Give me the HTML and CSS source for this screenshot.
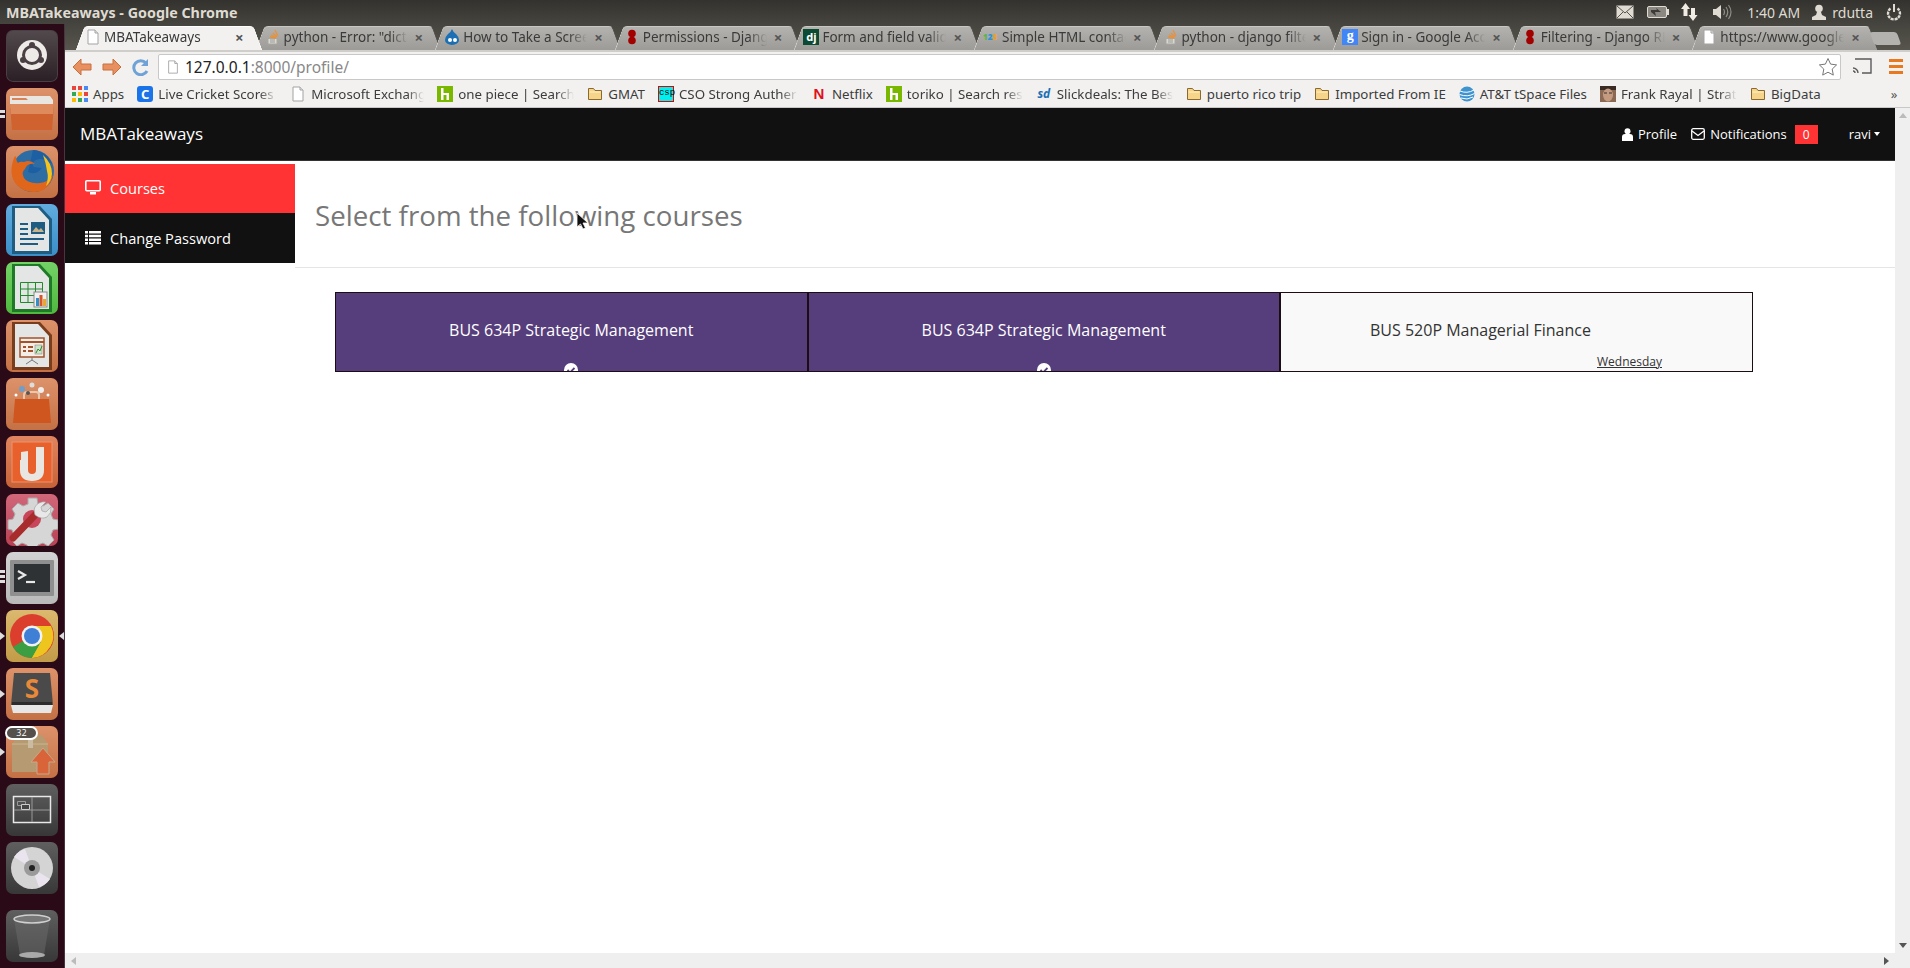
FILE: index.html
```html
<!DOCTYPE html>
<html lang="en">
<head>
  <meta charset="UTF-8" />
  <title>MBATakeaways</title>
  <link rel="stylesheet" href="styles.css">
</head>
<body>

  <svg class="sprites" width="0" height="0">
    <symbol id="doc" viewBox="0 0 16 16"><path d="M3 1h7l3 3v11H3z" fill="#fff" stroke="#a3a3a3"/><path d="M10 1v3h3" fill="#e4e4e4" stroke="#a3a3a3"/></symbol>
    <symbol id="folder" viewBox="0 0 16 16"><path d="M1.5 13.5v-11h5l1.500 2h6.500v9z" fill="#f6d48a" stroke="#8a6a2c"/><path d="M2.500 6h11" stroke="#fff2c8"/></symbol>
    <symbol id="so" viewBox="0 0 16 16"><path d="M3 10v5h9v-5" fill="#d8d8d0" stroke="#a8a8a0"/><path d="M5 11h5M5 13h5" stroke="#999"/><path d="M5 8l6 1M6 6l5 2.500M8 4l4 4M10 1l3 6" stroke="#e8913a" stroke-width="1.300" fill="none"/></symbol>
    <symbol id="reddots" viewBox="0 0 16 16"><circle cx="8" cy="4.500" r="3.800" fill="#a30000"/><circle cx="8" cy="11.500" r="3.800" fill="#a30000"/></symbol>
    <symbol id="houzz" viewBox="0 0 16 16"><rect width="16" height="16" fill="#7ab800"/><path d="M4 2v12h2.500v-5h3v5H12V7H6.500V2z" fill="#fff"/></symbol>
  </svg>

  <div class="topbar">
    <span class="window-title">MBATakeaways - Google Chrome</span>
    <div class="tray">
      <svg class="tray-mail" width="18" height="14" viewBox="0 0 18 14"><rect x=".5" y=".5" width="17" height="13" fill="#dfdbd2"/><path d="M1 1l8 7 8-7M1 13l6-6M17 13l-6-6" fill="none" stroke="#55534b"/></svg>
      <svg class="tray-batt" width="22" height="14" viewBox="0 0 22 14"><rect x=".5" y="1.500" width="19" height="11" rx="1.500" fill="#8a8880" stroke="#dfdbd2"/><rect x="20" y="4" width="2" height="6" fill="#dfdbd2"/><path d="M4 5h6l-1-2 5 4h-6l1 4-5-4z" fill="#3c3b37"/></svg>
      <svg class="tray-net" width="17" height="20" viewBox="0 0 17 20"><path d="M4.500 1L9 7H6.500v7h-4V7H0z" fill="#f0ece3"/><path d="M12 19l4.500-6H14V6h-4v7H7.500z" fill="#f0ece3"/></svg>
      <svg class="tray-vol" width="20" height="18" viewBox="0 0 20 18"><path d="M1 6h3l5-4v14l-5-4H1z" fill="#dfdbd2"/><path d="M11.500 6q2 3 0 6M14 4q3.500 5 0 10M16.500 2q5 7 0 14" fill="none" stroke="#8f8d85" stroke-width="1.200"/></svg>
      <span class="tray-time">1:40 AM</span>
      <svg class="tray-user" width="14" height="16" viewBox="0 0 14 16"><circle cx="7" cy="4.500" r="3.800" fill="#dfdbd2"/><path d="M5 8h4l1 3 4 2v3H0v-3l4-2z" fill="#dfdbd2"/></svg>
      <span class="tray-name">rdutta</span>
      <svg class="tray-power" width="16" height="18" viewBox="0 0 16 18"><path d="M4.500 4.500a6 6 0 1 0 7 0" transform="translate(0 1)" fill="none" stroke="#dfdbd2" stroke-width="2.400" stroke-dasharray="3 .8"/><path d="M8 1v8" stroke="#dfdbd2" stroke-width="2"/></svg>
    </div>
  </div>

  <div class="desktop">
    <nav class="launcher">
      <div class="tile tile-dark">
        <svg viewBox="0 0 52 52"><circle cx="26" cy="25" r="15" fill="#eeeae8"/><circle cx="26" cy="25" r="8.500" fill="none" stroke="#4a4044" stroke-width="3"/><circle cx="26" cy="15" r="3" fill="#4a4044"/><circle cx="17" cy="30" r="3" fill="#4a4044"/><circle cx="35" cy="30" r="3" fill="#4a4044"/></svg>
      </div>
      <div class="tile tile-orange">
        <span class="pip pip-two"></span>
        <svg viewBox="0 0 52 52"><path d="M4 8h40l3 4v8H4z" fill="#e9e6e2"/><path d="M6 10h14l2 2H6z" fill="#d98258"/><path d="M4 16h44l-2 26H6z" fill="#d0622f"/><path d="M4 16h44l-1 10H5z" fill="#de8a5c"/></svg>
      </div>
      <div class="tile tile-orange">
        <svg viewBox="0 0 52 52"><circle cx="27" cy="25" r="21" fill="#2e6da4"/><path d="M27 4a21 21 0 0 1 19 14q-10-7-16-4t-2 7l8 1q-6 8-14 4" fill="#1d5fa3"/><path d="M8 12Q2 28 10 38q10 11 25 7 9-4 12-16-5 7-13 8-12 1-16-5-3-6 1-9 2-6 10-5-5-5-11-2-4-1-6 1-2-2-2-7-2 1-2 2" fill="#e0661b"/><path d="M37 9q9 8 9 19-1 8-6 12 3-8 1-15-1-8-4-16" fill="#f6c21c"/></svg>
      </div>
      <div class="tile tile-blue">
        <svg viewBox="0 0 52 52"><path d="M6 2h28l12 13v35H6z" fill="#1f5c82"/><path d="M9 4h23l11 12v31H9z" fill="#e4e6e6"/><path d="M14 19h8v2h-8zM14 24h8v2h-8zM14 29h8v2h-8zM14 34h24v2H14zM14 39h18v2H14z" fill="#1f5c82"/><rect x="25" y="18" width="14" height="12" fill="#1f5c82"/><path d="M26 28l4-5 3 3 2-2 3 4z" fill="#c9b48a"/></svg>
      </div>
      <div class="tile tile-green">
        <svg viewBox="0 0 52 52"><path d="M6 2h28l12 13v35H6z" fill="#1f7a28"/><path d="M9 4h23l11 12v31H9z" fill="#e4e6e6"/><path d="M14.500 20.500h22v20h-22zM14.500 27h22M14.500 33.500h22M22 20.500v20M29.500 20.500v20" fill="none" stroke="#1f8a28"/><rect x="28" y="30" width="13" height="15" fill="#f0f0f0" stroke="#888"/><rect x="30" y="36" width="3" height="8" fill="#2f8fc9"/><rect x="33.500" y="33" width="3" height="11" fill="#d8542a"/><rect x="37" y="37" width="3" height="7" fill="#e8a92c"/></svg>
      </div>
      <div class="tile tile-orange">
        <svg viewBox="0 0 52 52"><path d="M6 2h28l12 13v35H6z" fill="#7a3d1c"/><path d="M9 4h23l11 12v31H9z" fill="#e4e6e6"/><rect x="14" y="18" width="24" height="19" fill="#f3efe8" stroke="#a4522a" stroke-width="1.500"/><path d="M14 22h24" stroke="#a4522a" stroke-width="2"/><path d="M17 26h3v2h-3zM17 30h3v2h-3zM22 26h5v2h-5zM22 30h5v2h-5z" fill="#a4522a"/><rect x="29" y="25" width="7" height="9" fill="#cfe3c9" stroke="#777" stroke-width=".5"/><path d="M30 33l2-4 2 2 2-5" fill="none" stroke="#2c8a2c"/><path d="M26 37v3l-6 4M26 40l6 4" stroke="#777" fill="none"/></svg>
      </div>
      <div class="tile tile-orange">
        <svg viewBox="0 0 52 52"><path d="M9 21h34l2 24H7z" fill="#d0561f"/><path d="M18 21v-4q0-3 3-3h9q3 0 3 3v4" fill="none" stroke="#e9c6ac" stroke-width="2"/><circle cx="16" cy="11" r="3" fill="#6f9fc9"/><circle cx="26" cy="7" r="2.500" fill="#ddd"/><circle cx="35" cy="12" r="3" fill="#eee"/><circle cx="22" cy="15" r="2" fill="#555"/><circle cx="42" cy="17" r="1.500" fill="#fff"/><circle cx="10" cy="17" r="1.500" fill="#fff"/></svg>
      </div>
      <div class="tile tile-ubone">
        <svg viewBox="0 0 52 52"><rect x="6" y="6" width="40" height="40" fill="#e8602c" stroke="#f0926a"/><path d="M15 16h6v6h-6z" fill="#eee"/><path d="M15 16l7-1v19q0 4 4 4t4-4V11h8v23q0 11-12 11T14 34V24h1z" fill="#e9e6e2"/></svg>
      </div>
      <div class="tile tile-red">
        <svg viewBox="0 0 52 52"><path d="M22 4h9l1 6 5 2 5-3 6 6-3 5 2 5 5 1v9l-5 1-2 5 3 5-6 6-5-3-5 2-1 2H22l-1-2-5-2-5 3-6-6 3-5-2-5-4-1v-9l5-1 2-5-3-5 6-6 5 3 5-2z" fill="#d6d6d6" stroke="#aaa"/><circle cx="26" cy="25" r="9" fill="#c8455a"/><path d="M7 44l23-24" stroke="#a82c2c" stroke-width="7" stroke-linecap="round"/><path d="M29 21q-3-8 4-12 4-2 7-1l-5 5 1 4 4 1 5-5q1 6-4 10-6 3-12-2z" fill="#e8e8e8" stroke="#999" stroke-width=".6"/></svg>
      </div>
      <div class="tile tile-silver">
        <span class="pip pip-three"></span>
        <svg viewBox="0 0 52 52"><rect x="4" y="8" width="44" height="36" fill="#8f8f8f" rx="1"/><rect x="8" y="12" width="36" height="28" fill="#2f3234"/><path d="M12 19l7 4-7 4" fill="none" stroke="#e8e8e8" stroke-width="2.200"/><path d="M20 30h9" stroke="#e8e8e8" stroke-width="2.200"/></svg>
      </div>
      <div class="tile tile-gold">
        <span class="pip pip-arrow"></span>
        <span class="pip pip-back"></span>
        <svg viewBox="0 0 52 52"><circle cx="26" cy="26" r="22" fill="#dc3e2e"/><path d="M26 26h21a22 22 0 0 1-3 11L26 48z" fill="#eec41e"/><path d="M26 16h19a22 22 0 0 1-1 21L34 32z" fill="#eec41e"/><path d="M7 37a22 22 0 0 0 19 11l9-16-18-1z" fill="#3b9e42"/><path d="M26 48l9-16 9 5a22 22 0 0 1-18 11z" fill="#eec41e"/><circle cx="26" cy="26" r="10.500" fill="#f2f2f2"/><circle cx="26" cy="26" r="8" fill="#3f7fd6"/></svg>
      </div>
      <div class="tile tile-orange">
        <span class="pip pip-arrow"></span>
        <svg viewBox="0 0 52 52"><path d="M8 5h36l3 32H5z" fill="#4a4a4a"/><path d="M5 37h42l-2 8H7z" fill="#e6e6e6"/><path d="M6 34h40v3H6z" fill="#2c2c2c"/><text x="26" y="30" class="sublime-s">S</text></svg>
      </div>
      <div class="tile tile-orange">
        <span class="pip pip-arrow"></span>
        <span class="count">32</span>
        <svg viewBox="0 0 52 52"><path d="M6 18l6-9h24l6 9v28H6z" fill="#b69a72"/><path d="M6 18h36" stroke="#cdb590"/><path d="M22 9h5v13h-5z" fill="#cbbba0"/><path d="M37 22l12 14h-6v12H31V36h-6z" fill="#d9643a" stroke="#c4a98a"/></svg>
      </div>
      <div class="tile tile-grey">
        <svg viewBox="0 0 52 52"><rect x="7.500" y="12.500" width="37" height="26" fill="none" stroke="#e8e8e8" stroke-width="1.500"/><path d="M26 13v25M8 26h36" stroke="#999"/><path d="M11.500 17.500h8v4h-8z" fill="none" stroke="#999"/><path d="M15.500 20.500h8v5h-8z" fill="#444" stroke="#ccc"/></svg>
      </div>
      <div class="tile tile-grey">
        <svg viewBox="0 0 52 52"><circle cx="26" cy="26" r="21" fill="#d4d4d4"/><path d="M26 26L8 15a21 21 0 0 1 11-8zM26 26l18 11a21 21 0 0 1-11 8z" fill="#e9e4ee"/><circle cx="26" cy="26" r="8" fill="#9a9a9a"/><circle cx="26" cy="26" r="3" fill="#222"/></svg>
      </div>
      <div class="tile tile-grey tile-trash">
        <svg viewBox="0 0 52 52"><path d="M8 9l6 36h24l6-36z" fill="#6c6c6c" fill-opacity=".5"/><ellipse cx="26" cy="9" rx="18" ry="4" fill="#777" stroke="#d0d0d0" stroke-width="1.500"/><ellipse cx="26" cy="45" rx="13" ry="3" fill="#aaa"/></svg>
      </div>
    </nav>

    <div class="browser">
      <div class="tabstrip">
        <div class="tab tab-active"><svg class="fav"><use href="#doc"/></svg><span class="tab-title">MBATakeaways</span><span class="tab-x">×</span></div>
        <div class="tab"><svg class="fav"><use href="#so"/></svg><span class="tab-title">python - Error: "dict</span><span class="tab-x">×</span></div>
        <div class="tab"><svg class="fav" viewBox="0 0 16 16"><path d="M8 0q1 3 4 5 3 3 3 6a7 5 0 0 1-14 0q0-3 3-6 3-2 4-5z" fill="#1a6fb5"/><circle cx="6" cy="11" r="2" fill="#fff"/><circle cx="11" cy="11" r="2" fill="#fff"/></svg><span class="tab-title">How to Take a Scree</span><span class="tab-x">×</span></div>
        <div class="tab"><svg class="fav"><use href="#reddots"/></svg><span class="tab-title">Permissions - Djang</span><span class="tab-x">×</span></div>
        <div class="tab"><span class="fav fav-dj">dj</span><span class="tab-title">Form and field valid</span><span class="tab-x">×</span></div>
        <div class="tab"><span class="fav fav-123"><b class="c-green">1</b><b class="c-blue">2</b><b class="c-orange">3</b></span><span class="tab-title">Simple HTML contac</span><span class="tab-x">×</span></div>
        <div class="tab"><svg class="fav"><use href="#so"/></svg><span class="tab-title">python - django filte</span><span class="tab-x">×</span></div>
        <div class="tab"><span class="fav fav-g">g</span><span class="tab-title">Sign in - Google Acco</span><span class="tab-x">×</span></div>
        <div class="tab"><svg class="fav"><use href="#reddots"/></svg><span class="tab-title">Filtering - Django RE</span><span class="tab-x">×</span></div>
        <div class="tab"><svg class="fav"><use href="#doc"/></svg><span class="tab-title">https://www.google</span><span class="tab-x">×</span></div>
        <div class="newtab"></div>
      </div>

      <div class="toolbar">
        <svg class="tool-back" width="20" height="18" viewBox="0 0 20 18"><path d="M9 1L1 9l8 8v-5h10V6H9z" fill="#e89060" stroke="#c8703c"/></svg>
        <svg class="tool-fwd" width="20" height="18" viewBox="0 0 20 18"><path d="M11 1l8 8-8 8v-5H1V6h10z" fill="#e89060" stroke="#c8703c"/></svg>
        <svg class="tool-reload" width="17" height="18" viewBox="0 0 17 18"><path d="M14 5a7 7 0 1 0 1 8" fill="none" stroke="#6fa2d6" stroke-width="3"/><path d="M16 1v7H9z" fill="#6fa2d6"/></svg>
        <div class="omnibox">
          <svg class="omni-doc"><use href="#doc"/></svg>
          <span class="url"><span class="url-host">127.0.0.1</span>:8000/profile/</span>
          <svg class="omni-star" width="20" height="20" viewBox="0 0 20 20"><path d="M10 1.500l2.600 5.600 6 .8-4.400 4.200 1.100 6L10 15.200l-5.300 2.900 1.100-6L1.400 7.900l6-.8z" fill="#fff" stroke="#777"/></svg>
        </div>
        <svg class="tool-cast" width="20" height="17" viewBox="0 0 20 17"><path d="M3 1h16v14H10" fill="none" stroke="#5a5a5a" stroke-width="1.400"/><path d="M1 10a5 5 0 0 1 5 5M1 13a2 2 0 0 1 2 2" fill="none" stroke="#5a5a5a" stroke-width="1.400"/></svg>
        <div class="tool-menu"><i></i><i></i><i></i></div>
      </div>

      <div class="bookmarks">
        <div class="bm bm-apps"><span class="apps-grid"><i class="g1"></i><i class="g2"></i><i class="g3"></i><i class="g4"></i><i class="g5"></i><i class="g6"></i><i class="g7"></i><i class="g8"></i><i class="g9"></i></span><span>Apps</span></div>
        <div class="bm bm-clip bm-live"><span class="fav fav-c">C</span><span class="bm-text">Live Cricket Scores</span></div>
        <div class="bm bm-clip bm-ms"><svg class="fav"><use href="#doc"/></svg><span class="bm-text">Microsoft Exchang</span></div>
        <div class="bm bm-clip"><svg class="fav"><use href="#houzz"/></svg><span class="bm-text">one piece | Search</span></div>
        <div class="bm"><svg class="fav"><use href="#folder"/></svg><span>GMAT</span></div>
        <div class="bm bm-clip bm-live"><span class="fav fav-csp">csp</span><span class="bm-text">CSO Strong Auther</span></div>
        <div class="bm"><span class="fav fav-n">N</span><span>Netflix</span></div>
        <div class="bm bm-clip"><svg class="fav"><use href="#houzz"/></svg><span class="bm-text">toriko | Search resu</span></div>
        <div class="bm bm-clip"><span class="fav fav-sd">sd</span><span class="bm-text">Slickdeals: The Bes</span></div>
        <div class="bm"><svg class="fav"><use href="#folder"/></svg><span>puerto rico trip</span></div>
        <div class="bm"><svg class="fav"><use href="#folder"/></svg><span>Imported From IE</span></div>
        <div class="bm"><svg class="fav" viewBox="0 0 16 16"><circle cx="8" cy="8" r="7.500" fill="#3f94cf"/><path d="M1 5q7 3 14-1M.5 8.500q8 3 15-1M2 12q6 2.500 12-1" fill="none" stroke="#fff"/></svg><span>AT&amp;T tSpace Files</span></div>
        <div class="bm bm-clip"><svg class="fav" viewBox="0 0 16 16"><rect width="16" height="16" fill="#8a6a55"/><path d="M0 0h16v4H0z" fill="#3a2c24"/><ellipse cx="8" cy="9" rx="5" ry="6.500" fill="#c49a80"/><path d="M4 7h3M9 7h3" stroke="#333"/></svg><span class="bm-text">Frank Rayal | Strate</span></div>
        <div class="bm"><svg class="fav"><use href="#folder"/></svg><span>BigData</span></div>
        <span class="bm-more">»</span>
      </div>

      <div class="viewport">
        <div class="page">
          <header class="site-nav">
            <a class="brand">MBATakeaways</a>
            <div class="site-links">
              <span class="site-link">
                <svg width="11" height="13" viewBox="0 0 11 13"><circle cx="5.500" cy="3.200" r="3" fill="#fff"/><path d="M0 13V9q0-3 3-3h5q3 0 3 3v4z" fill="#fff"/></svg>
                Profile
              </span>
              <span class="site-link">
                <svg width="14" height="12" viewBox="0 0 14 12"><rect x=".7" y=".7" width="12.600" height="10.600" rx="1.500" fill="none" stroke="#fff" stroke-width="1.300"/><path d="M1 3l6 4.500L13 3" fill="none" stroke="#fff" stroke-width="1.300"/></svg>
                Notifications
              </span>
              <span class="badge">0</span>
              <span class="user-menu">ravi<i class="caret"></i></span>
            </div>
          </header>

          <div class="page-body">
            <aside class="sidebar">
              <a class="side-item side-active">
                <svg width="16" height="15" viewBox="0 0 16 15"><rect x=".8" y=".8" width="14.400" height="10" rx="1" fill="none" stroke="#fff" stroke-width="1.600"/><rect x="5" y="12" width="6" height="2.500" fill="#fff"/></svg>
                Courses
              </a>
              <a class="side-item">
                <svg width="16" height="14" viewBox="0 0 16 14"><path d="M0 0h16v2.500H0zM0 3.700h16v2.500H0zM0 7.400h16v2.500H0zM0 11.100h16v2.500H0z" fill="#fff"/><path d="M3.500 0v14" stroke="#111"/></svg>
                Change Password
              </a>
            </aside>

            <main class="content">
              <div class="page-header">
                <h1>Select from the following courses</h1>
              </div>
              <div class="courses">
                <div class="course course-on">
                  <span class="course-name">BUS 634P Strategic Management</span>
                  <span class="course-check"><svg width="14" height="14" viewBox="0 0 14 14"><circle cx="7" cy="7" r="7" fill="#fff"/><path d="M3.500 7l2.500 2.500L10.500 5" fill="none" stroke="#563d7c" stroke-width="1.800"/></svg></span>
                </div>
                <div class="course course-on">
                  <span class="course-name">BUS 634P Strategic Management</span>
                  <span class="course-check"><svg width="14" height="14" viewBox="0 0 14 14"><circle cx="7" cy="7" r="7" fill="#fff"/><path d="M3.500 7l2.500 2.500L10.500 5" fill="none" stroke="#563d7c" stroke-width="1.800"/></svg></span>
                </div>
                <div class="course course-off">
                  <span class="course-name">BUS 520P Managerial Finance</span>
                  <a class="course-day">Wednesday</a>
                </div>
              </div>
            </main>
          </div>

          <svg class="cursor" width="13" height="18" viewBox="0 0 13 18"><path d="M1 1v14l3.500-3 2.500 5 2.500-1-2.500-5H12z" fill="#111" stroke="#fff" stroke-width=".8"/></svg>

          <div class="hscroll"><i class="arrow-left"></i><i class="arrow-right"></i></div>
        </div>
        <div class="vscroll"><i class="arrow-up"></i><i class="arrow-down"></i></div>
      </div>
    </div>
  </div>

</body>
</html>
```

FILE: styles.css
```css
/* Desktop frame */
html, body {
  margin: 0;
  padding: 0;
  height: 100%;
  overflow: hidden;
}

body {
  display: flex;
  flex-direction: column;
  font-family: 'Open Sans', 'Noto Sans', sans-serif;
  background: #fff;
}

.sprites {
  position: absolute;
}

.topbar {
  height: 24px;
  flex: none;
  display: flex;
  align-items: center;
  justify-content: space-between;
  background: linear-gradient(#33322e, #45443e);
  color: #dfdbd2;
  font-family: 'Noto Sans', sans-serif;
}

.window-title {
  margin-left: 6px;
  font-size: 14.3px;
  font-weight: 700;
}

.tray {
  display: flex;
  align-items: center;
  margin-right: 8px;
  font-size: 14px;
}

.tray-batt { margin-left: 13px; }
.tray-net { margin-left: 12px; }
.tray-vol { margin-left: 14px; }
.tray-time { margin-left: 15px; }
.tray-user { margin-left: 12px; }
.tray-name { margin-left: 6px; }
.tray-power { margin-left: 13px; }

.desktop {
  flex: 1;
  display: flex;
  min-height: 0;
}

/* Launcher */
.launcher {
  width: 65px;
  flex: none;
  box-sizing: border-box;
  padding: 6px 0 0 6px;
  display: flex;
  flex-direction: column;
  gap: 6px;
  background: #2a0a17;
  border-right: 1px solid #4a3440;
}

.tile {
  position: relative;
  width: 52px;
  height: 52px;
  flex: none;
  border-radius: 7px;
  background-image: linear-gradient(rgba(255, 255, 255, 0.18), rgba(0, 0, 0, 0.08));
}

.tile svg {
  display: block;
  width: 52px;
  height: 52px;
}

.tile-dark { background-color: #2d2227; box-shadow: inset 0 0 0 1px #4a4044; }
.tile-orange { background-color: #d57a4a; }
.tile-blue { background-color: #3f9ad8; }
.tile-green { background-color: #55c844; }
.tile-ubone { background-color: #d96a3c; }
.tile-red { background-color: #c8465c; }
.tile-silver { background-color: #c9c9c9; }
.tile-gold { background-color: #d3a94e; }
.tile-grey { background-color: #3c3c3c; }
.tile-trash { margin-top: 10px; }

.pip {
  position: absolute;
  left: -6px;
  top: 22px;
  width: 4px;
  height: 8px;
}

.pip-two {
  height: 3px;
  width: 5px;
  background: #ddd;
  box-shadow: 0 5px 0 #ddd;
}

.pip-three {
  height: 3px;
  width: 5px;
  top: 18px;
  background: #ddd;
  box-shadow: 0 5px 0 #ddd, 0 10px 0 #ddd;
}

.pip-arrow {
  width: 0;
  height: 0;
  border-left: 5px solid #ddd;
  border-top: 4px solid transparent;
  border-bottom: 4px solid transparent;
}

.pip-back {
  left: auto;
  right: -6px;
  width: 0;
  height: 0;
  border-right: 5px solid #ddd;
  border-top: 4px solid transparent;
  border-bottom: 4px solid transparent;
}

.count {
  position: absolute;
  left: -1px;
  top: 0;
  z-index: 1;
  width: 33px;
  height: 14px;
  box-sizing: border-box;
  border: 2px solid #fff;
  border-radius: 7px;
  background: #55504c;
  color: #fff;
  font-size: 9px;
  line-height: 10px;
  text-align: center;
}

.sublime-s {
  font-family: 'Open Sans', sans-serif;
  font-size: 26px;
  font-weight: 700;
  fill: #e8893a;
  text-anchor: middle;
}

/* Chrome */
.browser {
  flex: 1;
  min-width: 0;
  display: flex;
  flex-direction: column;
}

.tabstrip {
  height: 26px;
  flex: none;
  display: flex;
  align-items: flex-end;
  padding-left: 9px;
  background: linear-gradient(#45443e, #57554d);
  font-family: 'Noto Sans', sans-serif;
  font-size: 13.5px;
}

.tab {
  position: relative;
  width: 179.6px;
  height: 24px;
  flex: none;
  display: flex;
  align-items: center;
  padding: 0 0 2px 11px;
  box-sizing: border-box;
  color: #3a3a3a;
}

.tab::before, .tab::after {
  content: "";
  position: absolute;
  top: 0;
  bottom: 0;
  width: 55%;
  background: linear-gradient(#b3b2ae, #9c9b97);
  border-top: 1px solid #c8c7c3;
  z-index: 0;
}

.tab::before {
  left: 6px;
  transform: skewX(-20deg);
  border-left: 1px solid #d8d7d3;
  border-radius: 4px 0 0 0;
}

.tab::after {
  right: -4px;
  transform: skewX(20deg);
  border-right: 1px solid #55534d;
  border-radius: 0 4px 0 0;
}

.tab-active::before, .tab-active::after {
  background: #f2f1f0;
  border-color: #fff;
}

.tab-active {
  z-index: 1;
}

.tab > * {
  position: relative;
  z-index: 1;
}

.fav {
  width: 16px;
  height: 16px;
  flex: none;
  display: inline-block;
}

.tab-title {
  width: 124px;
  margin-left: 3px;
  overflow: hidden;
  white-space: nowrap;
  -webkit-mask-image: linear-gradient(to right, #000 85%, transparent);
  mask-image: linear-gradient(to right, #000 85%, transparent);
}

.tab-x {
  margin-left: 7px;
  color: #555;
  font-size: 15px;
  font-weight: 700;
  line-height: 1;
}

.fav-dj {
  background: #0c4b33;
  color: #fff;
  font: bold 11px/15px 'Noto Sans', sans-serif;
  text-align: center;
}

.fav-123 {
  font: bold 8px/16px 'Noto Sans', sans-serif;
  white-space: nowrap;
}

.c-green { color: #55b848; }
.c-blue { color: #2f8fd8; }
.c-orange { color: #eda02c; }

.fav-g {
  background: #4285f4;
  color: #fff;
  font: bold 14px/14px 'Liberation Serif', serif;
  text-align: center;
}

.fav-c {
  background: #1a73e8;
  color: #fff;
  border-radius: 3px;
  font: bold 13px/16px 'Noto Sans', sans-serif;
  text-align: center;
}

.fav-csp {
  background: #00f0f0;
  color: #000;
  border: 1px solid #e00000;
  box-sizing: border-box;
  font: 9px/12px 'Liberation Mono', monospace;
  text-align: center;
}

.fav-n {
  color: #e01020;
  font: bold 15px/16px 'Liberation Sans', sans-serif;
  text-align: center;
}

.fav-sd {
  color: #1a6fb5;
  font: italic bold 12px/16px 'Noto Sans', sans-serif;
  text-align: center;
}

.newtab {
  width: 27px;
  height: 13px;
  margin: 0 0 5px 2px;
  background: #b3b2ae;
  border-radius: 3px;
  transform: skewX(20deg);
}

.toolbar {
  height: 31px;
  flex: none;
  box-sizing: border-box;
  display: flex;
  align-items: center;
  padding-left: 7px;
  background: #f2f1f0;
  border-top: 2px solid #cfcecb;
}

.tool-fwd { margin-left: 10px; }
.tool-reload { margin-left: 10px; }

.omnibox {
  flex: none;
  width: 1683px;
  height: 26px;
  margin-left: 9px;
  box-sizing: border-box;
  display: flex;
  align-items: center;
  padding: 0 2px 0 7px;
  background: #fff;
  border: 1px solid #c8c8c8;
  border-radius: 2px;
}

.omni-doc {
  width: 14px;
  height: 16px;
}

.url {
  flex: 1;
  margin-left: 5px;
  color: #888;
  font-family: 'Noto Sans', sans-serif;
  font-size: 15.5px;
}

.url-host { color: #222; }

.tool-cast { margin-left: 11px; }

.tool-menu {
  margin-left: 17px;
  width: 14px;
  display: flex;
  flex-direction: column;
  gap: 3px;
}

.tool-menu i {
  display: block;
  height: 3px;
  background: #e8791e;
}

.bookmarks {
  height: 27px;
  flex: none;
  box-sizing: border-box;
  display: flex;
  align-items: center;
  padding-left: 7px;
  background: #f2f1f0;
  border-bottom: 1px solid #c8c8c8;
  color: #3c3c3c;
  font-family: 'Noto Sans', sans-serif;
  font-size: 13.3px;
  white-space: nowrap;
}

.bm {
  display: flex;
  align-items: center;
  gap: 5px;
  flex: none;
  margin-right: 13px;
}

.bm-clip {
  width: 137px;
}

.bm-live { width: 140px; }
.bm-ms { width: 134px; }

.bm-text {
  flex: 1;
  min-width: 0;
  overflow: hidden;
  -webkit-mask-image: linear-gradient(to right, #000 85%, transparent);
  mask-image: linear-gradient(to right, #000 85%, transparent);
}

.apps-grid {
  width: 16px;
  height: 16px;
  display: grid;
  grid-template-columns: repeat(3, 4px);
  grid-auto-rows: 4px;
  gap: 2px;
}

.apps-grid i { display: block; }
.g1 { background: #e8453c; }
.g2 { background: #e8453c; }
.g3 { background: #4a8af4; }
.g4 { background: #34a853; }
.g5 { background: #fbbc05; }
.g6 { background: #e8453c; }
.g7 { background: #fbbc05; }
.g8 { background: #34a853; }
.g9 { background: #4a8af4; }

.bm-more {
  margin-left: 57px;
  color: #555;
  font-size: 13px;
}

/* Page */
.viewport {
  flex: 1;
  min-height: 0;
  display: flex;
}

.page {
  position: relative;
  flex: 1;
  min-width: 0;
  display: flex;
  flex-direction: column;
}

.site-nav {
  height: 53px;
  flex: none;
  box-sizing: border-box;
  display: flex;
  align-items: center;
  justify-content: space-between;
  padding: 0 15px;
  background: #111;
  border-bottom: 1px solid #333;
  color: #fff;
}

.brand {
  padding-bottom: 2px;
  font-size: 17px;
}

.site-links {
  display: flex;
  align-items: center;
  font-size: 13px;
}

.site-link {
  display: flex;
  align-items: center;
  gap: 5px;
  margin-right: 14px;
}

.badge {
  width: 23px;
  height: 19px;
  margin-left: -6px;
  background: #ff3333;
  color: #fff;
  font-size: 12px;
  line-height: 19px;
  text-align: center;
}

.user-menu {
  margin-left: 31px;
  display: flex;
  align-items: center;
}

.caret {
  margin-left: 3px;
  border-top: 4px solid #fff;
  border-left: 3.5px solid transparent;
  border-right: 3.5px solid transparent;
}

.page-body {
  flex: 1;
  display: flex;
  min-height: 0;
}

.sidebar {
  width: 230px;
  flex: none;
  padding-top: 3px;
}

.side-item {
  height: 50px;
  box-sizing: border-box;
  display: flex;
  align-items: center;
  gap: 9px;
  padding-left: 20px;
  background: #111;
  color: #fff;
  font-size: 14.6px;
}

.side-active {
  height: 49px;
  padding-bottom: 2px;
  background: #ff3333;
}

.content {
  flex: 1;
  min-width: 0;
}

.page-header {
  height: 107px;
  box-sizing: border-box;
  display: flex;
  align-items: center;
  padding: 2px 20px 0;
  border-bottom: 1px solid #e5e5e5;
}

h1 {
  margin: 0;
  color: #777;
  font-size: 27.7px;
  font-weight: 400;
}

.courses {
  display: grid;
  grid-template-columns: repeat(3, 472.5px);
  margin: 24px 0 0 40px;
  height: 80px;
}

.course {
  position: relative;
  overflow: hidden;
  border: 1px solid #1c0c14;
  box-sizing: border-box;
  display: flex;
  justify-content: center;
  padding-top: 26px;
  font-size: 16px;
}

.course-on {
  background: #563d7c;
  color: #fff;
}

.course-off {
  justify-content: flex-start;
  padding-left: 89px;
  background: #f9f9f9;
  color: #333;
}

.course-check {
  position: absolute;
  left: 50%;
  bottom: -6px;
  margin-left: -7px;
  line-height: 0;
}

.course-day {
  position: absolute;
  left: 316px;
  bottom: 1px;
  color: #333;
  font-size: 12px;
  text-decoration: underline;
}

.cursor {
  position: absolute;
  left: 511px;
  top: 104px;
}

.hscroll {
  height: 15px;
  flex: none;
  display: flex;
  align-items: center;
  justify-content: space-between;
  padding: 0 6px;
  background: #efefef;
}

.vscroll {
  width: 15px;
  flex: none;
  display: flex;
  flex-direction: column;
  align-items: center;
  justify-content: space-between;
  padding: 5px 0 20px;
  box-sizing: border-box;
  background: #efefef;
}

.arrow-up {
  border-bottom: 5px solid #bbb;
  border-left: 4px solid transparent;
  border-right: 4px solid transparent;
}

.arrow-down {
  border-top: 5px solid #555;
  border-left: 4px solid transparent;
  border-right: 4px solid transparent;
}

.arrow-left {
  border-right: 5px solid #bbb;
  border-top: 4px solid transparent;
  border-bottom: 4px solid transparent;
}

.arrow-right {
  border-left: 5px solid #555;
  border-top: 4px solid transparent;
  border-bottom: 4px solid transparent;
}
```
